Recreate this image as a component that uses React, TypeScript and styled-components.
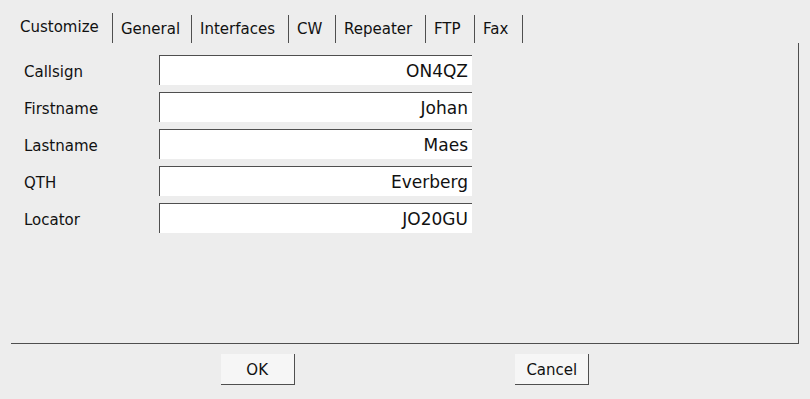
import React from 'react';
import styled, { createGlobalStyle } from 'styled-components';

const GlobalStyle = createGlobalStyle`
  html, body {
    margin: 0;
    padding: 0;
    background: #ededed;
  }
  body {
    font-family: 'DejaVu Sans', 'Liberation Sans', sans-serif;
    color: #111;
  }
`;

const Window = styled.div`
  width: 810px;
  height: 399px;
  box-sizing: border-box;
  padding: 13px 11px 0 11px;
  display: flex;
  flex-direction: column;
  overflow: hidden;
`;

const TabBar = styled.div`
  display: flex;
  align-items: flex-end;
  height: 30px;
`;

const Tab = styled.div<{ $active?: boolean; $w: number }>`
  width: ${p => p.$w}px;
  height: ${p => (p.$active ? 30 : 28)}px;
  box-sizing: border-box;
  display: flex;
  align-items: center;
  padding: ${p => (p.$active ? '0 0 2px 9px' : '0 0 0 8px')};
  border-right: 1px solid #4f4f4f;
  font-size: 15px;
  white-space: nowrap;
`;

const Panel = styled.div`
  height: 301px;
  box-sizing: border-box;
  border-right: 1px solid #4f4f4f;
  border-bottom: 1px solid #4f4f4f;
  padding: 12px 0 0 13px;
  display: flex;
  flex-direction: column;
  gap: 7px;
`;

const Row = styled.div`
  display: flex;
  align-items: center;
  height: 30px;
`;

const Label = styled.div`
  width: 135px;
  font-size: 15px;
  padding-top: 3px;
`;

const Field = styled.div`
  width: 313px;
  height: 30px;
  box-sizing: border-box;
  background: #fff;
  border-top: 1px solid #4f4f4f;
  border-left: 1px solid #4f4f4f;
  padding: 1px 4px 0 0;
  display: flex;
  align-items: center;
  justify-content: flex-end;
  font-size: 17px;
`;

const Buttons = styled.div`
  display: flex;
  justify-content: space-evenly;
  margin: 10px -11px 0;
`;

const Button = styled.div`
  width: 74px;
  height: 31px;
  box-sizing: border-box;
  background: #f6f6f6;
  border-right: 1px solid #4f4f4f;
  border-bottom: 1px solid #4f4f4f;
  display: flex;
  align-items: center;
  justify-content: center;
  padding-top: 2px;
  font-size: 15px;
`;

const tabs = [
  { name: 'Customize', w: 102 },
  { name: 'General', w: 79 },
  { name: 'Interfaces', w: 97 },
  { name: 'CW', w: 47 },
  { name: 'Repeater', w: 90 },
  { name: 'FTP', w: 49 },
  { name: 'Fax', w: 48 },
];

const fields = [
  { label: 'Callsign', value: 'ON4QZ' },
  { label: 'Firstname', value: 'Johan' },
  { label: 'Lastname', value: 'Maes' },
  { label: 'QTH', value: 'Everberg' },
  { label: 'Locator', value: 'JO20GU' },
];

export default function App() {
  return (
    <>
      <GlobalStyle />
      <Window>
        <TabBar>
          {tabs.map((t, i) => (
            <Tab key={t.name} $active={i === 0} $w={t.w}>
              {t.name}
            </Tab>
          ))}
        </TabBar>
        <Panel>
          {fields.map(f => (
            <Row key={f.label}>
              <Label>{f.label}</Label>
              <Field>{f.value}</Field>
            </Row>
          ))}
        </Panel>
        <Buttons>
          <Button>OK</Button>
          <Button>Cancel</Button>
        </Buttons>
      </Window>
    </>
  );
}
